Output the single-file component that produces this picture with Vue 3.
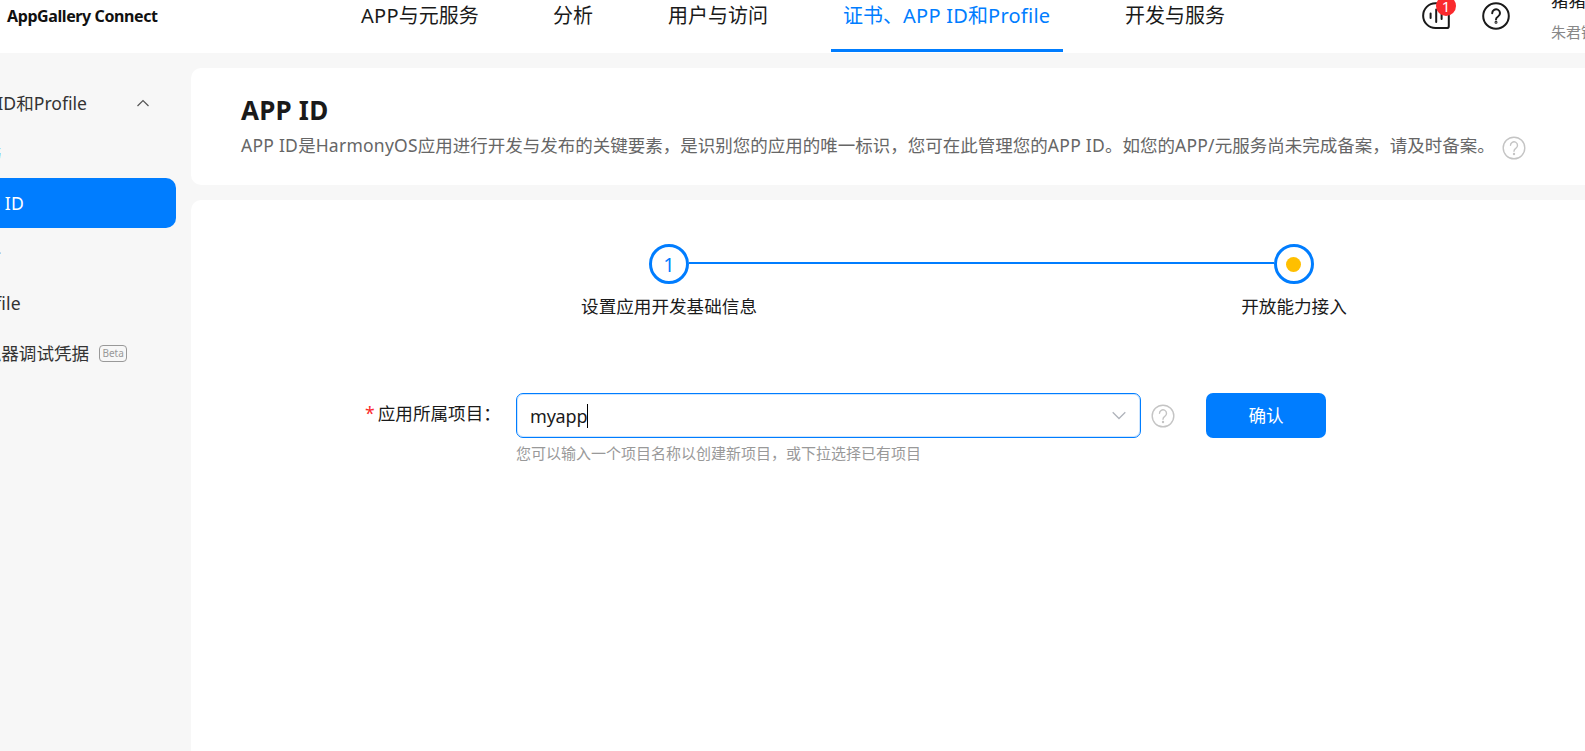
<template>
  <div class="page">
    <header class="header">
      <div class="logo">AppGallery Connect</div>
      <nav class="nav">
        <a
          v-for="item in navs"
          :key="item.key"
          class="nav-item"
          :class="[item.key, { active: item.key === 'cert' }]"
        >
          <span v-for="(part, i) in split(item.label)" :key="i" :class="{ en: part.en }">{{ part.text }}</span>
        </a>
      </nav>
      <div class="tools">
        <div class="message">
          <svg width="30" height="30" viewBox="0 0 30 30" fill="none" stroke="#1a1a1a" stroke-width="2" stroke-linecap="round">
            <path d="M15 3.300h-.5a12.300 12.300 0 0 0 0 24.700h11.500a1.800 1.800 0 0 0 1.800-1.800V15.500A12.300 12.300 0 0 0 15 3.300z" />
            <path d="M9.600 13.500v4.500M15.200 9.500v12.500M20.600 11.500v7.500" />
          </svg>
          <span class="badge">1</span>
        </div>
        <svg class="help" width="28" height="28" viewBox="0 0 28 28" fill="none" stroke="#1a1a1a" stroke-width="2" stroke-linecap="round" stroke-linejoin="round">
          <circle cx="14" cy="14" r="12.800" />
          <path d="M10.200 11.200a3.900 3.900 0 1 1 5.900 3.300c-1.500.9-2.100 1.500-2.100 3" />
          <circle cx="14" cy="20.300" r=".5" />
        </svg>
        <div class="user">
          <div class="user-name">猪猪侠</div>
          <div class="user-real">朱君锋</div>
        </div>
      </div>
    </header>

    <div class="body">
      <aside class="side">
        <div class="side-group">
          <span class="side-title">证书、<span class="en">APP ID</span>和<span class="en">Profile</span></span>
          <svg width="14" height="8" viewBox="0 0 14 8" fill="none" stroke="#555" stroke-width="1.200">
            <path d="M1.500 7 7 1.500 12.500 7" />
          </svg>
        </div>
        <div
          v-for="item in menus"
          :key="item.label"
          class="side-item"
          :class="{ active: item.active, hover: item.hover }"
        >
          <span v-for="(part, i) in split(item.label)" :key="i" class="side-text" :class="{ en: part.en }">{{ part.text }}</span>
          <span v-if="item.beta" class="beta">Beta</span>
        </div>
      </aside>

      <main class="main">
        <section class="card intro">
          <h1>APP ID</h1>
          <div class="desc">
            <span class="desc-text"><span v-for="(part, i) in split(desc)" :key="i" :class="{ en: part.en }">{{ part.text }}</span></span>
            <svg class="tip" width="24" height="24" viewBox="0 0 24 24">
              <circle cx="12" cy="12" r="10.800" />
              <path d="M8.500 9.300a3.500 3.500 0 1 1 5.300 3c-1.300.9-1.800 1.500-1.800 3" />
              <circle class="dot" cx="12" cy="18" r="1.200" />
            </svg>
          </div>
        </section>

        <section class="card content">
          <div class="steps">
            <div class="step">
              <div class="circle">1</div>
              <div class="step-label">设置应用开发基础信息</div>
            </div>
            <div class="line"></div>
            <div class="step">
              <div class="circle"><i class="point"></i></div>
              <div class="step-label">开放能力接入</div>
            </div>
          </div>

          <div class="form">
            <div class="label"><em>*</em>应用所属项目：</div>
            <div class="field">
              <div class="select">
                <span class="value">myapp</span>
                <i class="caret"></i>
                <svg class="arrow" width="14" height="9" viewBox="0 0 14 9" fill="none" stroke="#b0b4bb" stroke-width="1.300">
                  <path d="M.7 1.200 7 7.500l6.300-6.300" />
                </svg>
              </div>
              <div class="hint">您可以输入一个项目名称以创建新项目，或下拉选择已有项目</div>
            </div>
            <svg class="tip" width="24" height="24" viewBox="0 0 24 24">
              <circle cx="12" cy="12" r="10.800" />
              <path d="M8.500 9.300a3.500 3.500 0 1 1 5.300 3c-1.300.9-1.800 1.500-1.800 3" />
              <circle class="dot" cx="12" cy="18" r="1.200" />
            </svg>
            <button class="confirm">确认</button>
          </div>
        </section>
      </main>
    </div>
  </div>
</template>

<script setup>
const navs = [
  { key: 'app', label: 'APP与元服务' },
  { key: 'analysis', label: '分析' },
  { key: 'users', label: '用户与访问' },
  { key: 'cert', label: '证书、APP ID和Profile' },
  { key: 'dev', label: '开发与服务' }
]

const menus = [
  { label: '证书', hover: true },
  { label: 'APP ID', active: true },
  { label: '设备' },
  { label: 'Profile' },
  { label: '模拟器调试凭据', beta: true }
]

const desc =
  'APP ID是HarmonyOS应用进行开发与发布的关键要素，是识别您的应用的唯一标识，您可在此管理您的APP ID。如您的APP/元服务尚未完成备案，请及时备案。'

// latin runs get their own tracking
const split = (str) =>
  (str.match(/[\x20-\x7e]+|[^\x20-\x7e]+/g) || []).map((text) => ({
    text,
    en: /^[\x20-\x7e]/.test(text)
  }))
</script>

<style>
body {
  background: #f7f7f7;
  overflow: hidden;
}
</style>

<style scoped>
.page {
  width: 1585px;
  height: 751px;
  overflow: hidden;
  background: #f7f7f7;
  color: #1a1a1a;
  font-family: 'Noto Sans', 'Noto Sans CJK SC', sans-serif;
  font-size: 17.6px;
}
.page * {
  box-sizing: border-box;
}
.en {
  letter-spacing: 0.25px;
}
.header {
  display: flex;
  height: 53px;
  background: #fff;
  overflow: hidden;
}
.logo {
  flex: none;
  width: 349px;
  padding-left: 7px;
  line-height: 33px;
  font-size: 16px;
  font-weight: 700;
  letter-spacing: -0.4px;
  color: #111;
  white-space: nowrap;
}
.nav {
  display: flex;
  flex: none;
  gap: 50px;
  width: 1073px;
}
.nav-item {
  flex: none;
  height: 52px;
  padding: 0 12px;
  line-height: 32px;
  font-size: 20px;
  white-space: nowrap;
}
.nav-item.app {
  width: 142px;
}
.nav-item.analysis {
  width: 65px;
}
.nav-item.users {
  width: 125px;
}
.nav-item.cert {
  width: 232px;
}
.nav-item.active {
  color: #007dff;
  border-bottom: 3px solid #007dff;
}
.tools {
  display: flex;
  flex: none;
}
.message {
  position: relative;
  width: 60px;
  height: 30px;
  margin-left: -1px;
}
.message svg {
  display: block;
}
.badge {
  position: absolute;
  left: 15px;
  top: -4px;
  width: 20px;
  height: 20px;
  border-radius: 50%;
  background: #fa2a2d;
  color: #fff;
  font-size: 15px;
  line-height: 20px;
  text-align: center;
}
.help {
  flex: none;
  margin: 2px 0 0 1px;
}
.user {
  margin: -12px 0 0 41px;
  white-space: nowrap;
}
.user-name {
  line-height: 25px;
}
.user-real {
  margin-top: 7px;
  font-size: 15px;
  line-height: 24px;
  color: #888;
}
.body {
  display: flex;
  height: 698px;
}
.side {
  width: 191px;
  flex: none;
  overflow: hidden;
  padding-right: 15px;
  color: #333;
}
.side-group {
  display: flex;
  align-items: center;
  justify-content: flex-end;
  height: 50px;
  margin-top: 25px;
  padding-right: 26px;
  white-space: nowrap;
}
.side-group svg {
  flex: none;
  margin-left: 49px;
}
.side-title {
  flex: none;
  padding-bottom: 2px;
}
.side-title .en {
  letter-spacing: 0;
}
.side-item {
  display: flex;
  align-items: center;
  height: 50px;
  margin-left: -60px;
  padding-left: 26px;
  border-radius: 10px;
  white-space: pre;
}
.side-text {
  padding-bottom: 1px;
}
.side-item.hover {
  color: #007dff;
}
.side-item.active {
  background: #007dff;
  color: #fff;
}
.side-item.active .side-text {
  letter-spacing: 0.4px;
}
.beta {
  width: 28px;
  height: 17px;
  margin-left: 10px;
  border: 1px solid #999;
  border-radius: 4px;
  color: #999;
  font-size: 10px;
  line-height: 15px;
  text-align: center;
}
.main {
  flex: none;
  width: 1420px;
  padding-top: 15px;
}
.card {
  background: #fff;
  border-radius: 10px;
}
.intro {
  height: 117px;
  margin-bottom: 15px;
  padding: 24px 0 0 50px;
}
h1 {
  margin: 0;
  font-size: 26px;
  line-height: 36px;
  font-weight: 700;
  letter-spacing: 0.2px;
}
.desc {
  display: flex;
  align-items: center;
  height: 34px;
  color: #666;
  font-size: 17.5px;
  white-space: nowrap;
}
.desc-text {
  flex: none;
  width: 1260px;
  padding-bottom: 2px;
}
.tip {
  flex: none;
  fill: none;
  stroke: #c4c4c4;
  stroke-width: 1.4;
  stroke-linecap: round;
}
.tip .dot {
  fill: #c4c4c4;
  stroke: none;
}
.desc .tip {
  margin: 5px 0 0 1px;
}
.content {
  height: 600px;
  padding-top: 44px;
}
.steps {
  display: flex;
  margin-left: 458px;
}
.step {
  display: flex;
  flex-direction: column;
  align-items: center;
  width: 40px;
}
.circle {
  display: flex;
  align-items: center;
  justify-content: center;
  width: 40px;
  height: 40px;
  border: 3px solid #007dff;
  border-radius: 50%;
  color: #007dff;
  font-size: 20px;
}
.point {
  width: 15px;
  height: 15px;
  margin-right: 1px;
  border-radius: 50%;
  background: #ffbf00;
}
.step-label {
  margin-top: 9px;
  line-height: 26px;
  white-space: nowrap;
}
.line {
  width: 585px;
  height: 2px;
  margin-top: 18px;
  background: #007dff;
}
.form {
  display: flex;
  align-items: flex-start;
  margin-top: 74px;
}
.label {
  width: 325px;
  padding-left: 174px;
  line-height: 40px;
  white-space: nowrap;
}
.label em {
  margin-right: 3px;
  color: #fa2a2d;
  font-style: normal;
}
.field {
  width: 625px;
}
.select {
  display: flex;
  align-items: center;
  height: 45px;
  padding: 0 14px 0 13px;
  border: 1px solid #007dff;
  border-radius: 7px;
  box-shadow: inset 0 0 0 1px #cce5ff;
  font-size: 18px;
}
.value {
  letter-spacing: -0.2px;
}
.caret {
  width: 1px;
  height: 24px;
  background: #000;
}
.arrow {
  margin-left: auto;
}
.hint {
  margin-top: 3px;
  font-size: 15px;
  line-height: 24px;
  color: #999;
}
.form .tip {
  margin: 11px 0 0 10px;
}
.confirm {
  width: 120px;
  height: 45px;
  margin-left: 31px;
  padding: 0 0 2px;
  border: none;
  border-radius: 7px;
  background: #007dff;
  color: #fff;
  font: inherit;
}
</style>
